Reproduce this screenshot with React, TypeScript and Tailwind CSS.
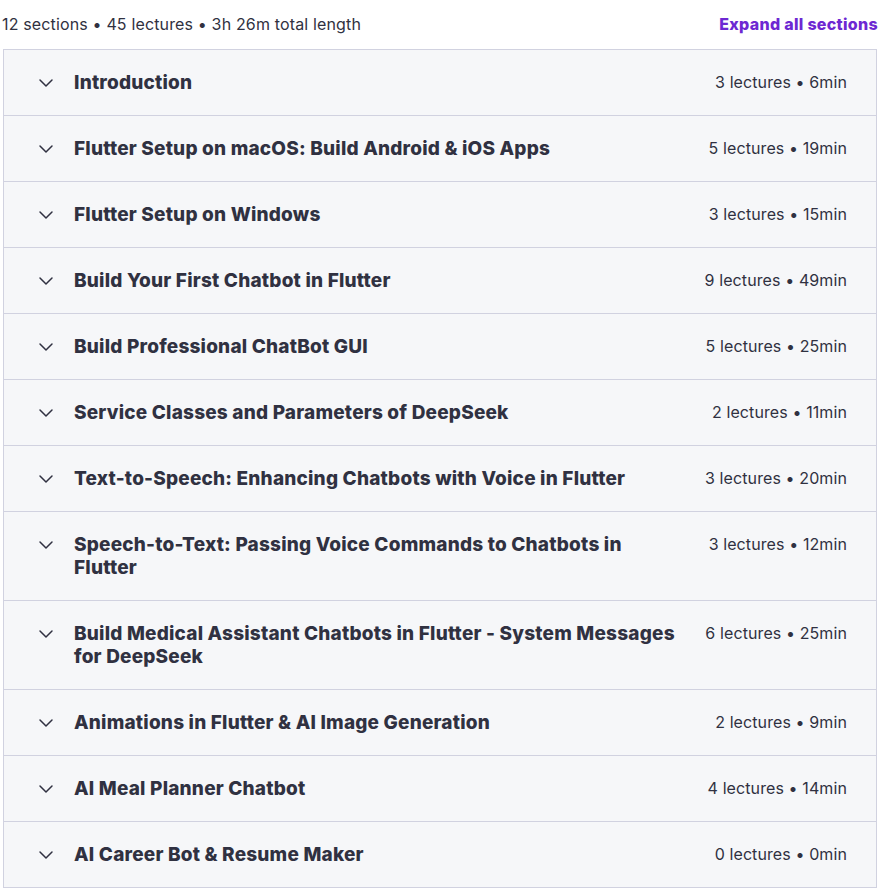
import { ChevronDown } from "lucide-react";

const sections = [
  { title: "Introduction", lectures: 3, length: "6min" },
  { title: "Flutter Setup on macOS: Build Android & iOS Apps", lectures: 5, length: "19min" },
  { title: "Flutter Setup on Windows", lectures: 3, length: "15min" },
  { title: "Build Your First Chatbot in Flutter", lectures: 9, length: "49min" },
  { title: "Build Professional ChatBot GUI", lectures: 5, length: "25min" },
  { title: "Service Classes and Parameters of DeepSeek", lectures: 2, length: "11min" },
  { title: "Text-to-Speech: Enhancing Chatbots with Voice in Flutter", lectures: 3, length: "20min" },
  { title: "Speech-to-Text: Passing Voice Commands to Chatbots in Flutter", lectures: 3, length: "12min" },
  { title: "Build Medical Assistant Chatbots in Flutter - System Messages for DeepSeek", lectures: 6, length: "25min" },
  { title: "Animations in Flutter & AI Image Generation", lectures: 2, length: "9min" },
  { title: "AI Meal Planner Chatbot", lectures: 4, length: "14min" },
  { title: "AI Career Bot & Resume Maker", lectures: 0, length: "0min" },
];

function SectionRow({ title, lectures, length }: { title: string; lectures: number; length: string }) {
  return (
    <div className="flex items-start border-b border-[#d1d2e0] bg-[#f6f7f9] py-[21px] pl-[30px] pr-[29px] last:border-b-0">
      <div className="flex h-[23px] w-6 shrink-0 items-center justify-center">
        <ChevronDown className="h-6 w-6 text-[#303141]" strokeWidth={1.5} />
      </div>
      <div className="ml-4 flex-1 pr-6 text-[19px] font-extrabold leading-[23px] tracking-[0.2px] text-[#303141]">
        {title}
      </div>
      <div className="shrink-0 text-[16px] leading-[23px] tracking-[0.1px] text-[#303141]">
        {lectures} lectures • {length}
      </div>
    </div>
  );
}

export default function App() {
  return (
    <div className="min-h-screen bg-white px-[2px] font-['Inter',sans-serif]">
      <div className="flex h-[49px] items-center justify-between pb-[2px]">
        <span className="text-[16px] tracking-[0.15px] text-[#303141]">
          12 sections • 45 lectures • 3h 26m total length
        </span>
        <button className="text-[16px] font-extrabold tracking-[0.3px] text-[#6d28d2]">Expand all sections</button>
      </div>
      <div className="mx-[1px] border border-[#d1d2e0]">
        {sections.map((s) => (
          <SectionRow key={s.title} {...s} />
        ))}
      </div>
    </div>
  );
}
